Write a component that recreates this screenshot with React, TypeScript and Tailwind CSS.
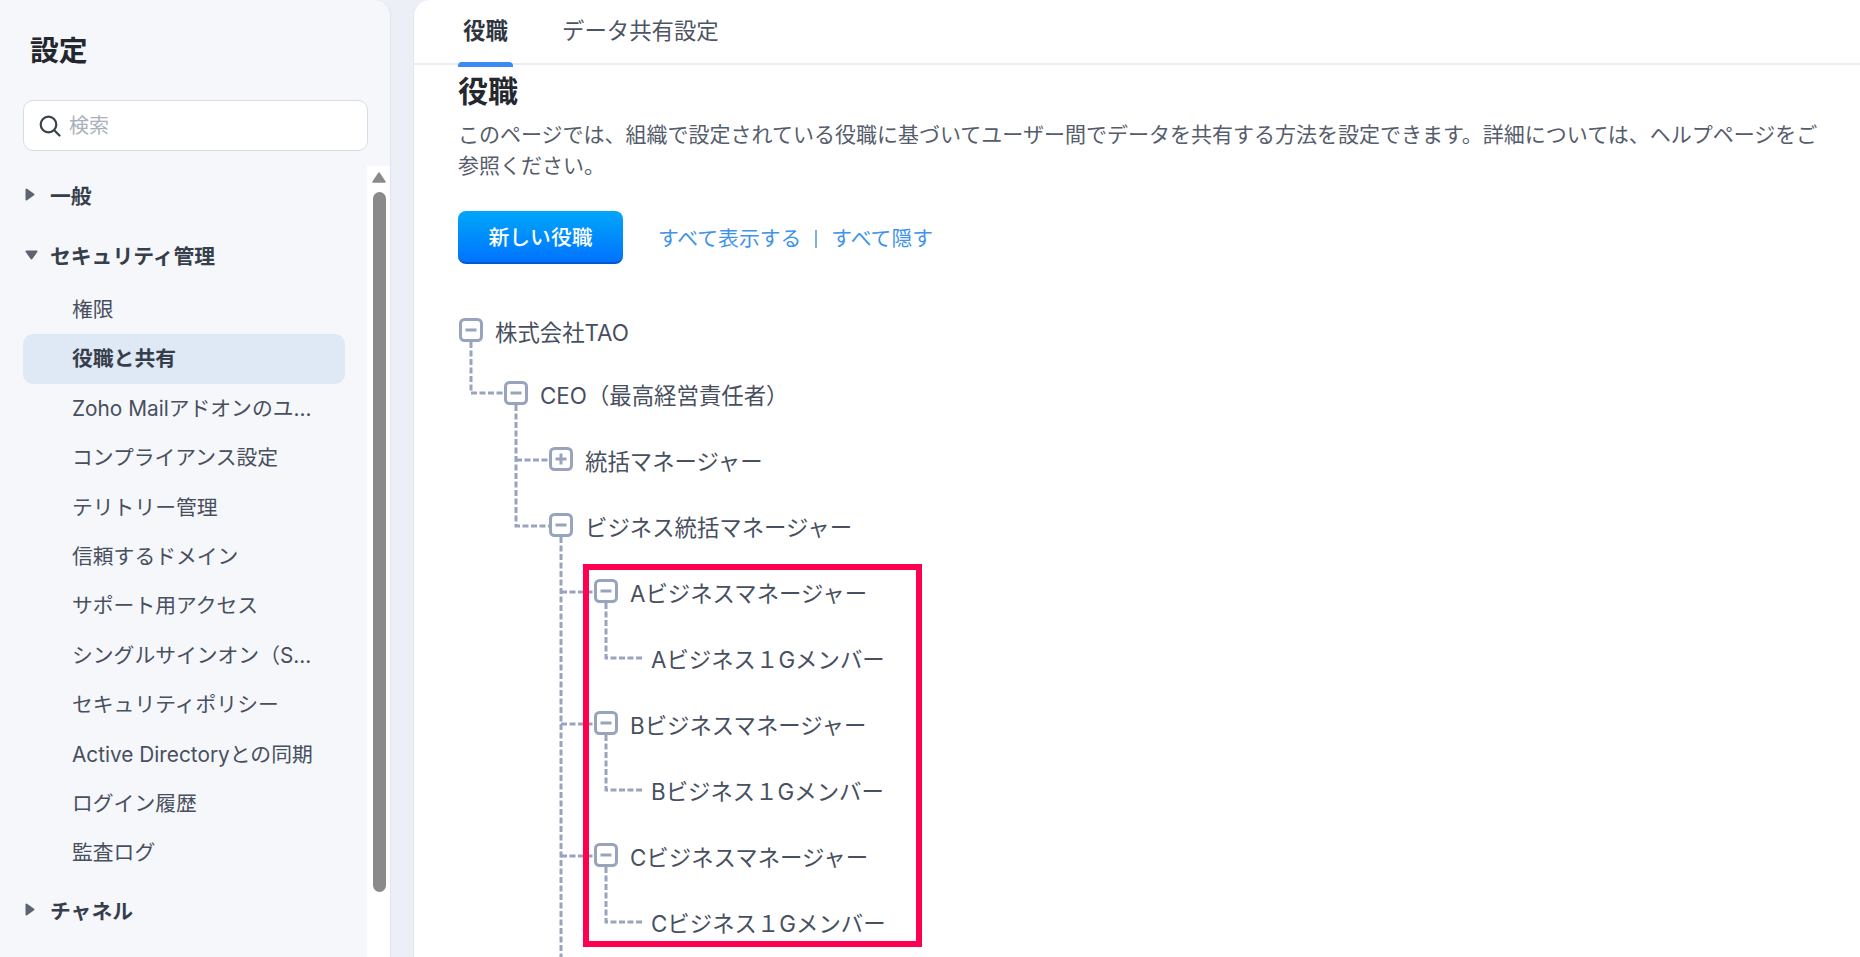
const items = ['権限','役職と共有','Zoho Mailアドオンのユ...','コンプライアンス設定','テリトリー管理','信頼するドメイン','サポート用アクセス','シングルサインオン（S...','セキュリティポリシー','Active Directoryとの同期','ログイン履歴','監査ログ'];

function Tri({ down }: { down?: boolean }) {
  return down ? (
    <svg width="13" height="10" viewBox="0 0 13 10" className="shrink-0"><path d="M1.5 1.5h10L6.5 8.5z" fill="#5f6570" stroke="#5f6570" strokeWidth="2" strokeLinejoin="round" /></svg>
  ) : (
    <svg width="10" height="13" viewBox="0 0 10 13" className="shrink-0"><path d="M1.5 1.5v10L8.5 6.5z" fill="#5f6570" stroke="#5f6570" strokeWidth="2" strokeLinejoin="round" /></svg>
  );
}

function Section({ label, down }: { label: string; down?: boolean }) {
  return (
    <div className="flex h-[49px] items-center pl-[25px] text-[20.8px] font-bold text-[#373e4b]">
      <span className="flex w-[25px] -translate-y-[2px]"><Tri down={down} /></span>
      <span>{label}</span>
    </div>
  );
}

function Box({ plus }: { plus?: boolean }) {
  return (
    <svg width="24" height="24" viewBox="0 0 24 24" className="shrink-0 -translate-y-[3px]">
      <rect x="1.5" y="1.5" width="21" height="21" rx="4" fill="#fff" stroke="#98a3bd" strokeWidth="3" />
      <path d={plus ? 'M6.5 12h11M12 6.5v11' : 'M6.5 12h11'} stroke="#98a3bd" strokeWidth="3" />
    </svg>
  );
}

function Row({ x, label, leaf, plus }: { x: number; label: string; leaf?: boolean; plus?: boolean }) {
  return (
    <div className="flex h-[66px] items-center gap-3 whitespace-nowrap text-[22.4px] text-[#474f60]" style={{ paddingLeft: x }}>
      {!leaf && <Box plus={plus} />}
      <span>{label}</span>
    </div>
  );
}

const lines = [
  'M12 42V93H45',
  'M57 105V226H90',
  'M57 160H90',
  'M102 237V657',
  'M102 292H135',
  'M102 424H135',
  'M102 556H135',
  'M147 303V358H183',
  'M147 435V490H183',
  'M147 567V622H183',
];

export default function App() {
  return (
    <div className="flex h-[957px] w-[1860px] overflow-hidden bg-[#ecf0f6] font-['Inter','Noto_Sans_CJK_JP',sans-serif]">
      <aside className="flex h-full w-[391px] shrink-0 flex-col rounded-tr-2xl border-r border-[#dfe5ee] bg-[#f5f7fa]">
        <h1 className="pl-[30px] pt-[31px] text-[28.8px] font-bold leading-[40px] text-[#24272e]">設定</h1>
        <div className="ml-[23px] mt-[29px] flex h-[51px] w-[345px] items-center gap-[8px] rounded-[10px] border-[1.5px] border-[#d8dce4] bg-white pl-[15px] text-[20px] text-[#a9b0bc]">
          <svg width="22" height="22" viewBox="0 0 22 22" fill="none" stroke="#3a404c" strokeWidth="2.2" strokeLinecap="round"><circle cx="9.5" cy="9.5" r="7.8" /><path d="M15.5 15.5l5 5" /></svg>
          <span>検索</span>
        </div>
        <div className="mt-[15px] flex min-h-0 flex-1">
          <nav className="min-w-0 flex-1 pt-[6px]">
            <Section label="一般" />
            <div className="h-[11px]" />
            <Section label="セキュリティ管理" down />
            <ul className="mt-[4px] pl-[23px] pr-[22px] text-[20.8px] text-[#484f5e]">
              {items.map((t, i) => (
                <li key={t} className={i === 1 ? 'flex h-[49.4px] items-center whitespace-nowrap rounded-[10px] bg-[#dee9f5] pl-[49px] font-bold text-[#373e4b]' : 'flex h-[49.4px] items-center whitespace-nowrap pl-[49px]'}>{t}</li>
              ))}
            </ul>
            <div className="h-[9px]" />
            <Section label="チャネル" />
          </nav>
          <div className="flex w-[23px] shrink-0 flex-col items-center bg-white pl-[1px] pt-[6px]">
            <svg width="14" height="11" viewBox="0 0 14 11"><path d="M7 1L13 10H1z" fill="#8a8a8a" stroke="#8a8a8a" strokeWidth="1.5" strokeLinejoin="round" /></svg>
            <div className="mt-[9px] h-[700px] w-[13px] rounded-full bg-[#8a8a8a]" />
          </div>
        </div>
      </aside>
      <main className="ml-[22px] min-w-0 flex-1 overflow-hidden rounded-tl-2xl border-l border-[#e3e8f0] bg-white">
        <div className="flex h-[65px] items-start border-b-2 border-[#e9edf3] pl-[44px] text-[22.4px] leading-[62px]">
          <div className="relative h-[65px] w-[55px] text-center font-bold text-[#30353f]">
            役職
            <span className="absolute bottom-[-2px] left-0 h-[5px] w-full rounded-t-[4px] bg-[#3b8bf5]" />
          </div>
          <div className="ml-[49px] text-[#4d5464]">データ共有設定</div>
        </div>
        <div className="pl-[44px] pr-[30px]">
          <h2 className="pt-[6px] text-[30px] font-bold leading-[40px] text-[#24272e]">役職</h2>
          <p className="mt-[8px] text-[21px] leading-[31px] text-[#555c6b]">このページでは、組織で設定されている役職に基づいてユーザー間でデータを共有する方法を設定できます。詳細については、ヘルプページをご参照ください。</p>
          <div className="mt-[30px] flex items-center">
            <button className="h-[53px] w-[165px] rounded-[8px] border-b-2 border-[#0059c9] bg-gradient-to-b from-[#00a6f9] to-[#0072fe] pt-[2px] text-[20.8px] font-medium text-white">新しい役職</button>
            <div className="ml-[35px] flex items-center pt-[2px] text-[20.8px] text-[#3f93ec]">
              <span>すべて表示する</span>
              <span className="mx-[14px] h-[18px] w-[2px] bg-[#7fb0e6]" />
              <span>すべて隠す</span>
            </div>
          </div>
          <div className="relative ml-[1px] mt-[36px] h-[657px]">
            <svg className="absolute left-0 top-0" width="400" height="657" fill="none" stroke="#98a3bd" strokeWidth="3" strokeDasharray="6 2.5">
              {lines.map((d) => <path key={d} d={d} />)}
            </svg>
            <div className="relative">
              <div className="-mb-[3px]"><Row x={0} label="株式会社TAO" /></div>
              <Row x={45} label="CEO（最高経営責任者）" />
              <Row x={90} label="統括マネージャー" plus />
              <Row x={90} label="ビジネス統括マネージャー" />
              <Row x={135} label="Aビジネスマネージャー" />
              <Row x={192} label="Aビジネス１Gメンバー" leaf />
              <Row x={135} label="Bビジネスマネージャー" />
              <Row x={192} label="Bビジネス１Gメンバー" leaf />
              <Row x={135} label="Cビジネスマネージャー" />
              <Row x={192} label="Cビジネス１Gメンバー" leaf />
            </div>
            <div className="absolute left-[124px] top-[264px] h-[383px] w-[339px] border-[6px] border-[#ff0050]" />
          </div>
        </div>
      </main>
    </div>
  );
}
